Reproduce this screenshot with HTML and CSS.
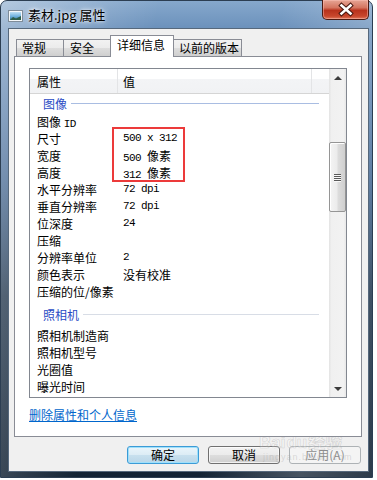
FILE: index.html
```html
<!DOCTYPE html>
<html lang="zh-CN">
<head>
<meta charset="utf-8">
<title>素材.jpg 属性</title>
<link rel="stylesheet" href="styles.css">
</head>
<body>
<div class="window">
  <div class="titlebar">
    <svg class="app-icon" width="15" height="12" viewBox="0 0 15 12">
      <defs>
        <linearGradient id="sky" x1="0" y1="0" x2="0" y2="1">
          <stop offset="0" stop-color="#bfe0f5"/>
          <stop offset="0.55" stop-color="#6fb1de"/>
          <stop offset="1" stop-color="#2f6f8c"/>
        </linearGradient>
      </defs>
      <rect x="0.5" y="0.5" width="14" height="11" fill="#f4f7fa" stroke="#7f8c99"/>
      <rect x="2" y="2" width="11" height="8" fill="url(#sky)"/>
      <path d="M2 10 L5 7 L8 8.5 L13 6 L13 10 Z" fill="#2e5f4a"/>
    </svg>
    <span class="title">素材.jpg 属性</span>
    <div class="close">
      <svg width="47" height="19" viewBox="0 0 47 19">
        <path d="M18.5 5.5 L27.5 13.5 M27.5 5.5 L18.5 13.5" stroke="#4a1810" stroke-width="4.6" stroke-linecap="square"/>
        <path d="M18.5 5.5 L27.5 13.5 M27.5 5.5 L18.5 13.5" stroke="#ffffff" stroke-width="2.6" stroke-linecap="square"/>
      </svg>
    </div>
  </div>

  <div class="client">
    <div class="tabs">
      <div class="tab w1">常规</div>
      <div class="tab w2">安全</div>
      <div class="tab active w3">详细信息</div>
      <div class="tab w4">以前的版本</div>
    </div>

    <div class="panel">
      <div class="listview">
        <div class="lv-main">
          <div class="lv-header">
            <div class="hcol c1">属性</div>
            <div class="hcol c2">值</div>
            <div class="hcol c3"></div>
          </div>

          <div class="group focus"><span class="gtext">图像</span><span class="rule"></span></div>
          <div class="row"><span class="k">图像 <span class="mono">ID</span></span><span class="v"></span></div>
          <div class="row"><span class="k">尺寸</span><span class="v mono">500 x 312</span></div>
          <div class="row"><span class="k">宽度</span><span class="v"><span class="mono">500 </span>像素</span></div>
          <div class="row"><span class="k">高度</span><span class="v"><span class="mono">312 </span>像素</span></div>
          <div class="row"><span class="k">水平分辨率</span><span class="v mono">72 dpi</span></div>
          <div class="row"><span class="k">垂直分辨率</span><span class="v mono">72 dpi</span></div>
          <div class="row"><span class="k">位深度</span><span class="v mono">24</span></div>
          <div class="row"><span class="k">压缩</span><span class="v"></span></div>
          <div class="row"><span class="k">分辨率单位</span><span class="v mono">2</span></div>
          <div class="row"><span class="k">颜色表示</span><span class="v">没有校准</span></div>
          <div class="row"><span class="k">压缩的位/像素</span><span class="v"></span></div>

          <div class="group second"><span class="gtext">照相机</span><span class="rule"></span></div>
          <div class="row"><span class="k">照相机制造商</span><span class="v"></span></div>
          <div class="row"><span class="k">照相机型号</span><span class="v"></span></div>
          <div class="row"><span class="k">光圈值</span><span class="v"></span></div>
          <div class="row"><span class="k">曝光时间</span><span class="v"></span></div>

          <div class="highlight"></div>
        </div>
        <div class="scrollbar">
          <div class="sb-btn"><span class="arrow up"></span></div>
          <div class="sb-track">
            <div class="thumb"><span class="grip"></span><span class="grip"></span><span class="grip"></span><span class="grip"></span></div>
          </div>
          <div class="sb-btn"><span class="arrow down"></span></div>
        </div>
      </div>
      <a class="link" href="#">删除属性和个人信息</a>
    </div>

    <div class="buttons">
      <button class="btn default">确定</button>
      <button class="btn">取消</button>
      <button class="btn disabled">应用(A)</button>
    </div>
  </div>

  <div class="watermark">
    <span class="wm-big">Bai<span class="wm-du">du</span>经验</span>
    <span class="wm-small">jingyan.baidu.com</span>
  </div>
</div>
</body>
</html>
```
FILE: styles.css
```css
* { box-sizing: border-box; }

body {
  margin: 0;
  background: #ffffff;
  font-family: "Noto Sans CJK SC", "Noto Sans", sans-serif;
  font-size: 12px;
}

.window {
  position: relative;
  width: 373px;
  height: 478px;
  display: flex;
  flex-direction: column;
  border-radius: 7px 7px 0 0;
  border: 1px solid #2c3e52;
  background:
    linear-gradient(100deg, rgba(255,255,255,0.38) 0%, rgba(255,255,255,0.12) 22%, rgba(255,255,255,0) 35%, rgba(255,255,255,0) 62%, rgba(255,255,255,0.22) 84%, rgba(255,255,255,0.1) 100%),
    linear-gradient(to bottom, #86a8cc 0%, #6a90bb 6%, #4f77a6 22%, #3a5f8c 38%, #1c3148 62%, #142435 100%);
}

.titlebar {
  height: 28px;
  display: flex;
  align-items: center;
  padding-left: 7px;
}

.app-icon {
  margin-top: 2px;
  flex: none;
}

.title {
  margin-left: 5px;
  margin-top: 1px;
  font-size: 13px;
  line-height: 18px;
  color: #000;
  text-shadow: 0 0 6px rgba(255,255,255,0.9), 0 0 3px rgba(255,255,255,0.9);
}

.close {
  margin-left: auto;
  margin-right: 3px;
  align-self: flex-start;
  margin-top: -1px;
  width: 47px;
  height: 20px;
  border: 1px solid #4b1b13;
  border-top: none;
  border-radius: 0 0 5px 5px;
  background: linear-gradient(to bottom, #e6a595 0%, #d47560 40%, #b8321c 55%, #c8462c 85%, #e0785a 100%);
  box-shadow: inset 0 0 0 1px rgba(255,200,190,0.45);
}

.close svg { display: block; margin-top: 0; }

.client {
  margin: 0 3px 5px 7px;
  flex: 1;
  background: #f0f0f0;
  border: 1px solid #56687c;
  display: flex;
  flex-direction: column;
  padding: 6px 6px 7px 5px;
}

/* tabs */
.tabs {
  display: flex;
  align-items: flex-end;
  height: 21px;
  padding-left: 2px;
  position: relative;
  z-index: 2;
}

.tab {
  height: 17px;
  border: 1px solid #898c95;
  border-bottom: none;
  background: linear-gradient(to bottom, #f2f2f2 0%, #ebebeb 50%, #dddddd 51%, #cfcfcf 100%);
  line-height: 15px;
  padding-left: 5px;
  color: #000;
  white-space: nowrap;
}

.tab + .tab { margin-left: -1px; }

.w1 { width: 48px; }
.w2 { width: 48px; padding-left: 6px; }
.w3 { width: 64px; }
.w4 { width: 69px; }

.tab.active {
  height: 22px;
  margin-bottom: -1px;
  background: #ffffff;
  padding-left: 6px;
  line-height: 17px;
  position: relative;
  z-index: 3;
}

/* panel */
.panel {
  height: 381px;
  width: 348px;
  background: #ffffff;
  border: 1px solid #898c95;
  padding: 11px 14px 0 14px;
  display: flex;
  flex-direction: column;
  position: relative;
  z-index: 1;
}

.listview {
  height: 330px;
  border: 1px solid #828790;
  display: flex;
}

.lv-main {
  flex: 1;
  position: relative;
  overflow: hidden;
}

.lv-header {
  display: flex;
  height: 25px;
  border-bottom: 1px solid #d5d5d5;
  background: linear-gradient(to bottom, #ffffff 0%, #ffffff 40%, #f3f4f6 41%, #f1f2f4 100%);
}

.hcol {
  padding-top: 4px;
  line-height: 17px;
  color: #000;
}

.c1 { width: 88px; padding-left: 7px; border-right: 1px solid #e3e4e6; }
.c2 { width: 194px; padding-left: 5px; border-right: 1px solid #e3e4e6; }
.c3 { flex: 1; }

.group {
  display: flex;
  align-items: center;
  padding-left: 13px;
  padding-right: 10px;
  height: 19px;
  line-height: 17px;
}

.group.second {
  height: 27px;
  padding-top: 1px;
}

.gtext {
  color: #2a4bc4;
}

.rule {
  flex: 1;
  height: 1px;
  margin-left: 4px;
  background: #d8dde6;
}

.group.focus .rule { background: #a9bde2; }

.row {
  display: flex;
  height: 17px;
  line-height: 17px;
  color: #000;
  white-space: nowrap;
}

.k { width: 93px; padding-left: 7px; }
.v { flex: 1; }

.mono {
  font-family: "Liberation Mono", "DejaVu Sans Mono", monospace;
  font-size: 11px;
  letter-spacing: -0.6px;
}

.highlight {
  position: absolute;
  left: 82px;
  top: 58px;
  width: 73px;
  height: 55px;
  border: 2px solid #ec3a3a;
}

/* scrollbar */
.scrollbar {
  width: 17px;
  display: flex;
  flex-direction: column;
  background: linear-gradient(to right, #e3e3e3 0%, #f0f0f0 15%, #f2f2f2 85%, #e8e8e8 100%);
}

.sb-btn {
  height: 17px;
  display: flex;
  align-items: center;
  justify-content: center;
}

.arrow {
  width: 0;
  height: 0;
  border-left: 4px solid transparent;
  border-right: 4px solid transparent;
}

.arrow.up { border-bottom: 4px solid #3c3c3c; }
.arrow.down { border-top: 4px solid #3c3c3c; }

.sb-track {
  flex: 1;
}

.thumb {
  margin-top: 56px;
  height: 70px;
  border: 1px solid #959595;
  border-radius: 2px;
  background: linear-gradient(to right, #f4f4f4 0%, #ececec 45%, #dcdcdc 55%, #cfcfcf 100%);
  box-shadow: inset 1px 1px 0 #ffffff;
  display: flex;
  flex-direction: column;
  justify-content: center;
  align-items: center;
  gap: 1px;
}

.grip {
  width: 7px;
  height: 1px;
  background: #5a5a5a;
  box-shadow: 0 1px 0 #f8f8f8;
}

/* link */
.link {
  margin-top: 8px;
  line-height: 17px;
  color: #0066cc;
  text-decoration: underline;
  align-self: flex-start;
}

/* buttons */
.buttons {
  margin-top: 9px;
  display: flex;
  justify-content: flex-end;
  gap: 9px;
  padding-right: 1px;
}

.btn {
  width: 72px;
  height: 18px;
  padding: 0;
  font-family: "Noto Sans CJK SC", "Noto Sans", sans-serif;
  font-size: 12px;
  line-height: 16px;
  color: #000;
  border: 1px solid #707070;
  border-radius: 3px;
  background: linear-gradient(to bottom, #f2f2f2 0%, #ebebeb 50%, #dddddd 51%, #cfcfcf 100%);
  box-shadow: inset 0 0 0 1px rgba(255,255,255,0.7);
}

.btn.default {
  border-color: #3c9bd6;
  background: linear-gradient(to bottom, #eaf5fb 0%, #dcecf5 50%, #c8e0ee 51%, #b9d6e8 100%);
  box-shadow: inset 0 0 0 1px #9fe0fb;
}

.btn.disabled {
  color: #8d8d8d;
  border-color: #adb2b5;
  background: #f4f4f4;
  box-shadow: none;
}

/* watermark overlay */
.watermark {
  position: absolute;
  left: 258px;
  top: 433px;
  display: flex;
  flex-direction: column;
  pointer-events: none;
}

.wm-big {
  font-family: "Liberation Sans", "Noto Sans CJK SC", sans-serif;
  font-size: 17px;
  line-height: 18px;
  font-weight: bold;
  color: rgba(255,255,255,0.25);
  -webkit-text-stroke: 0.6px rgba(150,150,150,0.35);
}

.wm-du { margin: 0 1px; }

.wm-small {
  font-family: "Liberation Sans", sans-serif;
  font-size: 9px;
  line-height: 10px;
  margin-left: 4px;
  color: rgba(160,160,160,0.35);
  letter-spacing: 1px;
}
```
